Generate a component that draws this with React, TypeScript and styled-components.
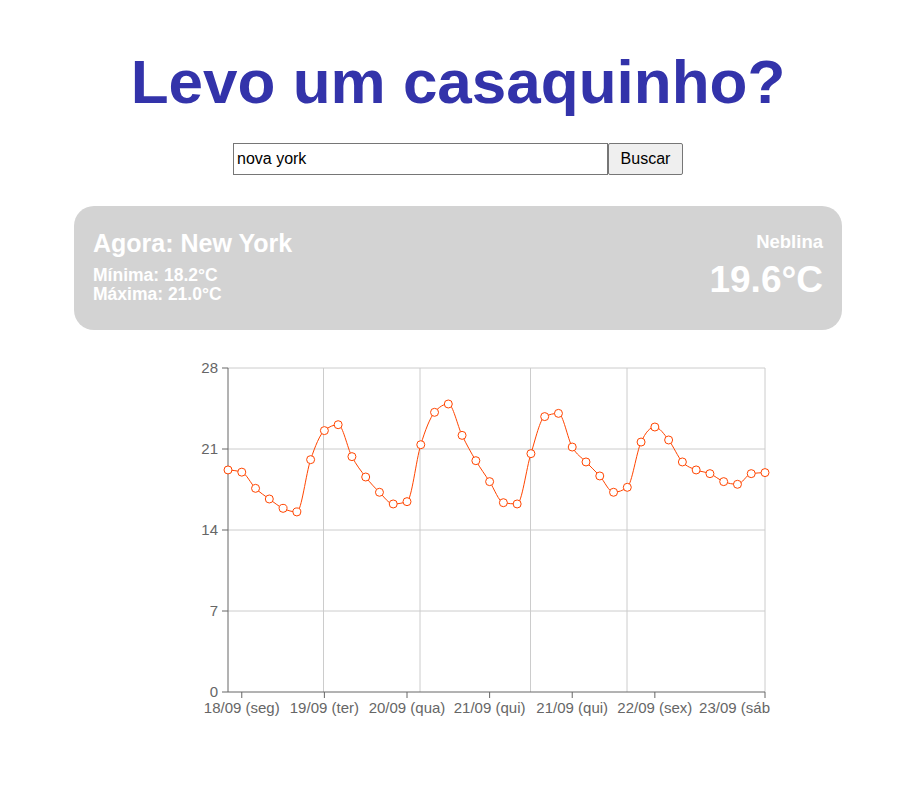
import React from 'react';
import styled, { createGlobalStyle } from 'styled-components';

const GlobalStyle = createGlobalStyle`
  body {
    margin: 0;
    background: #ffffff;
    font-family: 'Liberation Sans', Arial, sans-serif;
  }
`;

const temps = [
  19.19, 19.0, 17.6, 16.68, 15.87, 15.56, 20.08, 22.59, 23.1, 20.34,
  18.58, 17.26, 16.25, 16.45, 21.37, 24.17, 24.89, 22.18, 19.99, 18.18,
  16.36, 16.25, 20.6, 23.8, 24.08, 21.17, 19.88, 18.67, 17.26, 17.69,
  21.6, 22.9, 21.78, 19.88, 19.19, 18.87, 18.18, 17.95, 18.87, 18.96,
];

const LEFT = 228;
const RIGHT = 765;
const TOP = 368;
const BOTTOM = 692;
const MAX = 28;

const xAt = (i: number) => LEFT + (i * (RIGHT - LEFT)) / (temps.length - 1);
const yAt = (v: number) => BOTTOM - (v * (BOTTOM - TOP)) / MAX;

const yTicks = [0, 7, 14, 21, 28];
const xTicks = [
  { i: 1, label: '18/09 (seg)' },
  { i: 7, label: '19/09 (ter)' },
  { i: 13, label: '20/09 (qua)' },
  { i: 19, label: '21/09 (qui)' },
  { i: 25, label: '21/09 (qui)' },
  { i: 31, label: '22/09 (sex)' },
  { i: 39, label: '23/09 (sáb' },
];
const gridX = [323.5, 420, 530.5, 627, 765];

// curva monotone (mesma ideia do d3 curveMonotoneX)
function monotonePath(pts: { x: number; y: number }[]) {
  const n = pts.length;
  const h = pts[1].x - pts[0].x;
  const s = pts.slice(1).map((p, i) => (p.y - pts[i].y) / h);
  const sign = (v: number) => (v < 0 ? -1 : 1);
  const m: number[] = new Array(n).fill(0);
  for (let i = 1; i < n - 1; i++) {
    const s0 = s[i - 1];
    const s1 = s[i];
    const p = (s0 + s1) / 2;
    m[i] = (sign(s0) + sign(s1)) * Math.min(Math.abs(s0), Math.abs(s1), 0.5 * Math.abs(p)) || 0;
  }
  m[0] = (3 * s[0] - m[1]) / 2;
  m[n - 1] = (3 * s[n - 2] - m[n - 2]) / 2;
  let d = `M${pts[0].x},${pts[0].y}`;
  for (let i = 0; i < n - 1; i++) {
    const dx = h / 3;
    d += `C${pts[i].x + dx},${pts[i].y + dx * m[i]},${pts[i + 1].x - dx},${pts[i + 1].y - dx * m[i + 1]},${pts[i + 1].x},${pts[i + 1].y}`;
  }
  return d;
}

function TempChart() {
  const pts = temps.map((v, i) => ({ x: xAt(i), y: yAt(v) }));
  const last = xTicks.length - 1;

  return (
    <ChartSvg width={700} height={380} viewBox="74 350 700 380">
      <g stroke="#cccccc" strokeWidth={1}>
        {yTicks.slice(1).map((t) => (
          <line key={t} x1={LEFT} x2={RIGHT} y1={yAt(t)} y2={yAt(t)} />
        ))}
        {gridX.map((x) => (
          <line key={x} x1={x} x2={x} y1={TOP} y2={BOTTOM} />
        ))}
      </g>

      <g stroke="#666666" strokeWidth={1}>
        <line x1={LEFT} x2={LEFT} y1={TOP} y2={BOTTOM} />
        <line x1={LEFT} x2={RIGHT} y1={BOTTOM} y2={BOTTOM} />
        {yTicks.map((t) => (
          <line key={t} x1={LEFT - 6} x2={LEFT} y1={yAt(t)} y2={yAt(t)} />
        ))}
        {xTicks.map((t) => (
          <line key={t.i} x1={xAt(t.i)} x2={xAt(t.i)} y1={BOTTOM} y2={BOTTOM + 6} />
        ))}
      </g>

      <g fill="#666666" fontSize={15}>
        {yTicks.map((t) => (
          <AxisText key={t} x={LEFT - 10} y={yAt(t) + 5} textAnchor="end">
            {t}
          </AxisText>
        ))}
        {xTicks.map((t, k) =>
          k === last ? (
            <AxisText key={t.i} x={770} y={BOTTOM + 21} textAnchor="end">
              {t.label}
            </AxisText>
          ) : (
            <AxisText key={t.i} x={xAt(t.i)} y={BOTTOM + 21} textAnchor="middle">
              {t.label}
            </AxisText>
          ),
        )}
      </g>

      <path d={monotonePath(pts)} fill="none" stroke="#ff4500" strokeWidth={1} />
      {pts.map((p, i) => (
        <circle key={i} cx={p.x} cy={p.y} r={4} fill="#ffffff" stroke="#ff4500" strokeWidth={1} />
      ))}
    </ChartSvg>
  );
}

export default function App() {
  return (
    <>
      <GlobalStyle />
      <Main>
        <Title>Levo um casaquinho?</Title>

        <SearchForm onSubmit={(e) => e.preventDefault()}>
          <SearchInput defaultValue="nova york" />
          <SearchButton type="submit">Buscar</SearchButton>
        </SearchForm>

        <WeatherCard>
          <CardColumn>
            <CityName>Agora: New York</CityName>
            <MinMax>Mínima: 18.2°C</MinMax>
            <MinMax>Máxima: 21.0°C</MinMax>
          </CardColumn>
          <CardColumn $right>
            <Condition>Neblina</Condition>
            <CurrentTemp>19.6°C</CurrentTemp>
          </CardColumn>
        </WeatherCard>

        <TempChart />
      </Main>
    </>
  );
}

const Main = styled.main`
  width: 768px;
  margin-left: 74px;
  padding-top: 45px;
  display: flex;
  flex-direction: column;
`;

const Title = styled.h1`
  margin: 0;
  font-size: 62px;
  line-height: 73px;
  font-weight: bold;
  color: #3333aa;
  text-align: center;
`;

const SearchForm = styled.form`
  margin-top: 25px;
  display: flex;
  justify-content: center;
`;

const SearchInput = styled.input`
  box-sizing: border-box;
  width: 375px;
  height: 32px;
  padding: 1px 3px;
  border: 1px solid #767676;
  border-radius: 0;
  font-family: 'Liberation Sans', Arial, sans-serif;
  font-size: 16px;
  color: #000000;
`;

const SearchButton = styled.button`
  box-sizing: border-box;
  width: 75px;
  height: 32px;
  border: 1px solid #767676;
  border-radius: 2px;
  background: #efefef;
  font-family: 'Liberation Sans', Arial, sans-serif;
  font-size: 16px;
  color: #000000;
`;

const WeatherCard = styled.section`
  box-sizing: border-box;
  margin-top: 31px;
  height: 124px;
  padding: 23px 19px 0;
  border-radius: 20px;
  background: #d3d3d3;
  color: #ffffff;
  display: flex;
  justify-content: space-between;
`;

const CardColumn = styled.div<{ $right?: boolean }>`
  display: flex;
  flex-direction: column;
  align-items: ${({ $right }) => ($right ? 'flex-end' : 'flex-start')};
`;

const CityName = styled.h2`
  margin: 0 0 9px;
  font-size: 25px;
  line-height: 28px;
  font-weight: bold;
`;

const MinMax = styled.p`
  margin: 0;
  font-size: 17.5px;
  line-height: 19px;
  font-weight: bold;
`;

const Condition = styled.p`
  margin: 1px 0 0;
  font-size: 18.5px;
  line-height: 24px;
  font-weight: bold;
`;

const CurrentTemp = styled.p`
  margin: 5px 0 0;
  font-size: 37px;
  line-height: 42px;
  font-weight: bold;
`;

const ChartSvg = styled.svg`
  display: block;
  margin-top: 20px;
  font-family: 'Liberation Sans', Arial, sans-serif;
`;

const AxisText = styled.text`
  font-family: 'Liberation Sans', Arial, sans-serif;
`;
